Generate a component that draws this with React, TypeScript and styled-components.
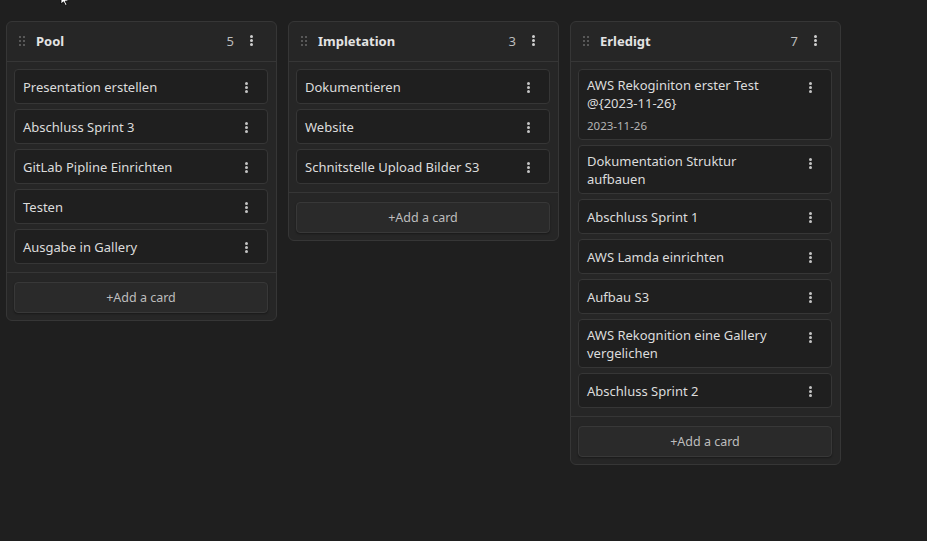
import React from "react";
import styled, { createGlobalStyle } from "styled-components";

const Global = createGlobalStyle`
  html, body { margin: 0; padding: 0; background: #1f1f1f; }
  body { font-family: "Noto Sans", "Open Sans", sans-serif; color: #dadada; }
`;

const Board = styled.div`
  position: relative;
  display: flex;
  align-items: flex-start;
  gap: 11px;
  padding: 21px 6px;
  min-height: 541px;
  box-sizing: border-box;
`;

const Column = styled.section`
  width: 271px;
  box-sizing: border-box;
  background: #262626;
  border: 1px solid #363636;
  border-radius: 6px;
  display: flex;
  flex-direction: column;
`;

const Header = styled.header`
  height: 40px;
  box-sizing: border-box;
  display: flex;
  align-items: center;
  padding: 0 23px 2px 12px;
  border-bottom: 1px solid #363636;
`;

const Handle = styled.span`
  display: grid;
  grid-template-columns: repeat(2, 2px);
  grid-auto-rows: 2px;
  gap: 2px;
  margin-right: 11px;
  & > i { background: #6a6a6a; border-radius: 1px; }
`;

const Title = styled.h2`
  margin: 0;
  flex: 1;
  font-size: 13px;
  font-weight: 700;
  color: #e3e3e3;
`;

const Count = styled.span`
  font-size: 13px;
  color: #bdbdbd;
  margin-right: 16px;
`;

const Kebab = styled.span`
  display: inline-flex;
  flex-direction: column;
  justify-content: center;
  gap: 1px;
  & > i { width: 3px; height: 3px; border-radius: 50%; background: #cfcfcf; }
`;

const Cards = styled.div`
  display: flex;
  flex-direction: column;
  gap: 5px;
  padding: 7px 8px 8px 7px;
  border-bottom: 1px solid #363636;
`;

const Card = styled.div`
  display: flex;
  align-items: flex-start;
  background: #1f1f1f;
  border: 1px solid #363636;
  border-radius: 4px;
  padding: 7px 19px 5px 8px;
`;

const CardBody = styled.div`
  flex: 1;
  min-height: 21px;
  padding-right: 18px;
  display: flex;
  flex-direction: column;
  justify-content: center;
  font-size: 13px;
  line-height: 17.5px;
  color: #dcdcdc;
`;

const CardDate = styled.div`
  margin-top: 6px;
  font-size: 11.5px;
  line-height: 16px;
  color: #b4b4b4;
`;

const CardKebab = styled(Kebab)`
  height: 21px;
  & > i { background: #c4c4c4; }
`;

const Footer = styled.div`
  padding: 9px 8px 7px 7px;
`;

const AddButton = styled.button`
  width: 100%;
  height: 31px;
  background: #2a2a2a;
  border: 1px solid #383838;
  border-radius: 4px;
  color: #bdbdbd;
  font-family: inherit;
  font-size: 12.5px;
  box-shadow: 0 1px 2px rgba(0,0,0,0.35);
`;

const Cursor = styled.svg`
  position: absolute;
  left: 60px;
  top: -6px;
`;

type CardData = { text: string; date?: string };
type ColumnData = { title: string; cards: CardData[] };

const columns: ColumnData[] = [
  {
    title: "Pool",
    cards: [
      { text: "Presentation erstellen" },
      { text: "Abschluss Sprint 3" },
      { text: "GitLab Pipline Einrichten" },
      { text: "Testen" },
      { text: "Ausgabe in Gallery" },
    ],
  },
  {
    title: "Impletation",
    cards: [
      { text: "Dokumentieren" },
      { text: "Website" },
      { text: "Schnitstelle Upload Bilder S3" },
    ],
  },
  {
    title: "Erledigt",
    cards: [
      { text: "AWS Rekoginiton erster Test @{2023-11-26}", date: "2023-11-26" },
      { text: "Dokumentation Struktur aufbauen" },
      { text: "Abschluss Sprint 1" },
      { text: "AWS Lamda einrichten" },
      { text: "Aufbau S3" },
      { text: "AWS Rekognition eine Gallery vergelichen" },
      { text: "Abschluss Sprint 2" },
    ],
  },
];

const Dots = ({ n }: { n: number }) => (
  <>
    {Array.from({ length: n }).map((_, i) => (
      <i key={i} />
    ))}
  </>
);

export default function App() {
  return (
    <>
      <Global />
      <Board>
        <Cursor width="12" height="12" viewBox="0 0 12 12">
          <path d="M1 0 L1 10 L3.5 7.8 L5.5 11.5 L7 10.8 L5.2 7.2 L8.5 7 Z" fill="#fff" stroke="#000" strokeWidth="0.8" />
        </Cursor>
        {columns.map((col) => (
          <Column key={col.title}>
            <Header>
              <Handle>
                <Dots n={6} />
              </Handle>
              <Title>{col.title}</Title>
              <Count>{col.cards.length}</Count>
              <Kebab>
                <Dots n={3} />
              </Kebab>
            </Header>
            <Cards>
              {col.cards.map((c) => (
                <Card key={c.text}>
                  <CardBody>
                    <span>{c.text}</span>
                    {c.date && <CardDate>{c.date}</CardDate>}
                  </CardBody>
                  <CardKebab>
                    <Dots n={3} />
                  </CardKebab>
                </Card>
              ))}
            </Cards>
            <Footer>
              <AddButton>+Add a card</AddButton>
            </Footer>
          </Column>
        ))}
      </Board>
    </>
  );
}
